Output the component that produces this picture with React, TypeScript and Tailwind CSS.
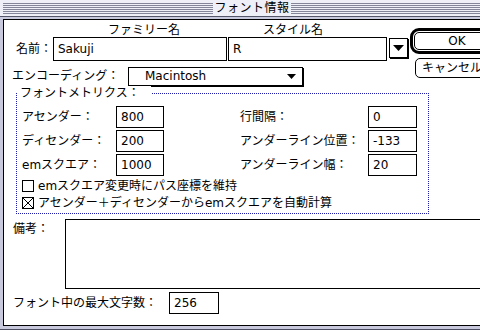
import React from "react";

const stripes = [0, 1, 2, 3, 4, 5];

function Stripes({ className }: { className: string }) {
  return (
    <div className={`flex flex-col gap-[1px] pt-[3px] ${className}`}>
      {stripes.map((s) => (
        <div key={s} className="h-[1px] bg-[#85859a]" />
      ))}
    </div>
  );
}

function Field({ value, className }: { value: string; className: string }) {
  return (
    <div className={`h-[22px] shrink-0 border border-black flex items-center pl-[4px] ${className}`}>
      {value}
    </div>
  );
}

function Triangle({ w, h }: { w: number; h: number }) {
  return (
    <svg width={w} height={h} viewBox={`0 0 ${w} ${h}`}>
      <polygon points={`0,0 ${w},0 ${w / 2},${h}`} fill="#000" />
    </svg>
  );
}

function MetricRow({ left, lv, right, rv }: { left: string; lv: string; right: string; rv: string }) {
  return (
    <div className="flex items-center h-[22px]">
      <span className="w-[94px] shrink-0">{left}</span>
      <Field value={lv} className="w-[48px]" />
      <span className="ml-[76px] w-[128px] shrink-0">{right}</span>
      <Field value={rv} className="w-[49px]" />
    </div>
  );
}

export default function App() {
  return (
    <div className="w-[480px] h-[330px] overflow-hidden bg-[#c9c9dd] border-b border-[#4c4c60] flex flex-col text-[12px] leading-[14px] text-black font-['DejaVu_Sans','Noto_Sans_CJK_JP',sans-serif]">
      {/* title bar */}
      <div className="h-[17px] shrink-0 flex bg-[#efeff8] border-b border-[#55556a]">
        <Stripes className="ml-[3px] w-[210px]" />
        <div className="w-[78px] shrink-0 flex items-center justify-center pb-[1px] tracking-[0.5px]">
          フォント情報
        </div>
        <Stripes className="flex-1" />
      </div>

      <div className="flex-1 ml-[3px] mt-[2px] mb-[3px] border-l border-t border-b border-black bg-white flex flex-col">
        {/* top */}
        <div className="flex">
          <div className="w-[406px] shrink-0 flex flex-col">
            <div className="h-[17px] flex items-end">
              <span className="ml-[104px] w-[155px] shrink-0">ファミリー名</span>
              <span>スタイル名</span>
            </div>
            <div className="h-[24px] flex items-center">
              <span className="ml-[12px] w-[37px] shrink-0">名前：</span>
              <div className="h-[24px] w-[174px] shrink-0 border border-black flex items-center pl-[4px]">Sakuji</div>
              <div className="ml-[1px] h-[24px] w-[159px] shrink-0 border border-black flex items-center pl-[4px]">R</div>
              <div className="ml-[2px] mb-[2px] w-[19px] h-[20px] shrink-0 border border-black shadow-[1px_1px_0_#000] flex items-center justify-center">
                <Triangle w={11} h={6} />
              </div>
            </div>
            <div className="mt-[5px] h-[20px] flex items-center">
              <span className="ml-[8px] w-[116px] shrink-0">エンコーディング：</span>
              <div className="w-[175px] h-[19px] shrink-0 border border-black shadow-[1px_1px_0_#000] flex items-center justify-between pl-[16px] pr-[6px]">
                <span>Macintosh</span>
                <Triangle w={9} h={5} />
              </div>
            </div>
          </div>
          <div className="shrink-0 flex flex-col pt-[8px]">
            <div className="w-[94px] h-[26px] border-[3px] border-black rounded-[9px] p-[1px]">
              <div className="h-full border border-black rounded-[5px] flex items-center justify-center">OK</div>
            </div>
            <div className="ml-[5px] mt-[4px] w-[74px] h-[20px] border border-black rounded-[5px] flex items-center justify-center">
              キャンセル
            </div>
          </div>
        </div>

        {/* metrics group */}
        <div className="relative ml-[12px] mt-[7px] w-[413px] h-[121px] shrink-0 border border-dotted border-[#1c1ca8] pl-[5px] pt-[12px]">
          <span className="absolute left-0 top-[-8px] bg-white pl-[3px] pr-[11px]">フォントメトリクス：</span>
          <div className="flex flex-col gap-[2px]">
            <MetricRow left="アセンダー：" lv="800" right="行間隔：" rv="0" />
            <MetricRow left="ディセンダー：" lv="200" right="アンダーライン位置：" rv="-133" />
            <MetricRow left="emスクエア：" lv="1000" right="アンダーライン幅：" rv="20" />
          </div>
          <div className="mt-[3px] h-[14px] flex items-center gap-[4px]">
            <div className="w-[12px] h-[12px] border border-black" />
            <span>emスクエア変更時にパス座標を維持</span>
          </div>
          <div className="mt-[3px] h-[14px] flex items-center gap-[4px]">
            <div className="w-[12px] h-[12px] border border-black">
              <svg width="10" height="10" viewBox="0 0 10 10">
                <path d="M0 0L10 10M10 0L0 10" stroke="#000" strokeWidth="1" />
              </svg>
            </div>
            <span>アセンダー＋ディセンダーからemスクエアを自動計算</span>
          </div>
        </div>

        {/* notes */}
        <div className="mt-[5px] flex">
          <span className="ml-[9px] w-[52px] shrink-0 pt-[3px]">備考：</span>
          <div className="w-[430px] h-[70px] shrink-0 border border-black" />
        </div>

        <div className="mt-[3px] h-[22px] flex items-center">
          <span className="ml-[9px] w-[156px] shrink-0">フォント中の最大文字数：</span>
          <Field value="256" className="w-[50px]" />
        </div>
      </div>
    </div>
  );
}
